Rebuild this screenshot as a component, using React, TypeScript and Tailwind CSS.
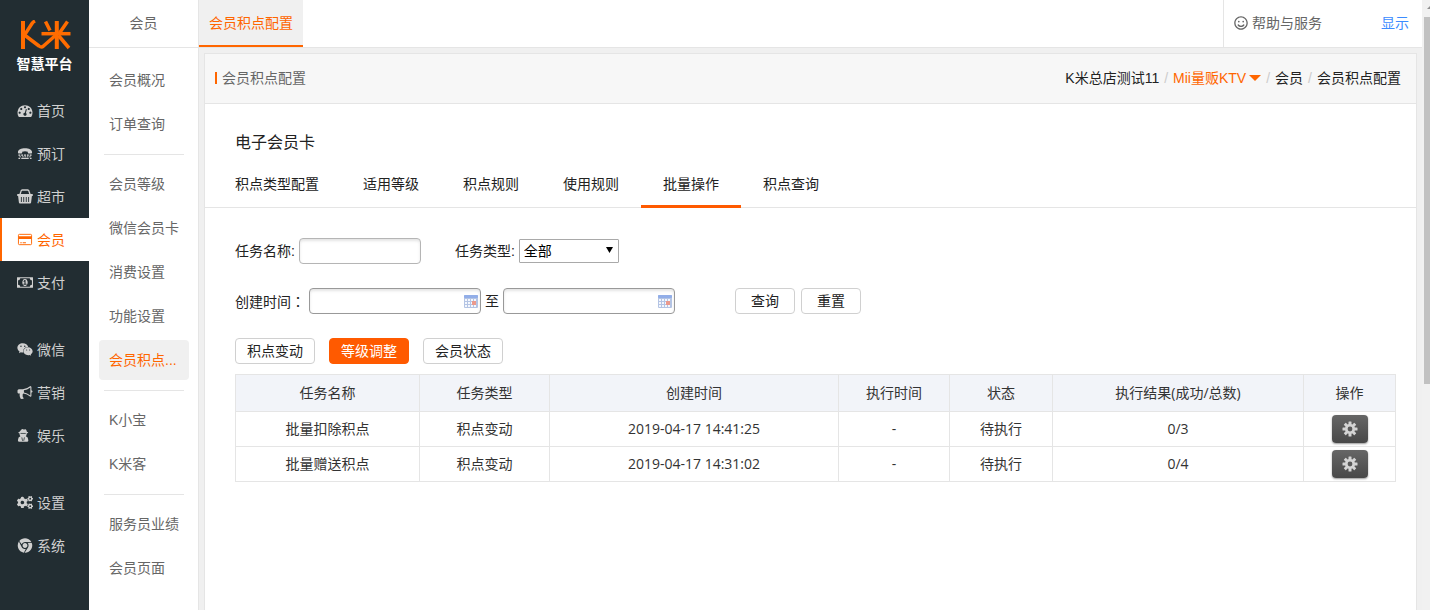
import React from "react"
import clsx from "clsx"
import { FaChrome, FaCogs, FaRegSmile, FaWeixin } from "react-icons/fa"

type IconProps = { className?: string }

function DashboardIcon({ className }: IconProps) {
  return (
    <svg viewBox="0 0 1792 1792" fill="currentColor" className={className}>
      <path d="M384 1152q0-53-37.5-90.5t-90.5-37.5-90.5 37.5-37.5 90.5 37.5 90.5 90.5 37.5 90.5-37.5 37.5-90.5zm192-448q0-53-37.5-90.5t-90.5-37.5-90.5 37.5-37.5 90.5 37.5 90.5 90.5 37.5 90.5-37.5 37.5-90.5zm428 481l101-382q6-26-7.5-48.5t-38.5-29.5-48 6.5-30 39.5l-101 382q-60 5-107 43.5t-63 98.5q-20 77 20 146t117 89 146-20 89-117q16-60-6-117t-72-91zm660-33q0-53-37.5-90.5t-90.5-37.5-90.5 37.5-37.5 90.5 37.5 90.5 90.5 37.5 90.5-37.5 37.5-90.5zm-640-640q0-53-37.5-90.5t-90.5-37.5-90.5 37.5-37.5 90.5 37.5 90.5 90.5 37.5 90.5-37.5 37.5-90.5zm448 192q0-53-37.5-90.5t-90.5-37.5-90.5 37.5-37.5 90.5 37.5 90.5 90.5 37.5 90.5-37.5 37.5-90.5zm320 448q0 261-141 483-19 29-54 29h-1402q-35 0-54-29-141-221-141-483 0-182 71-348t191-286 286-191 348-71 348 71 286 191 191 286 71 348z" />
    </svg>
  )
}

function PhoneIcon({ className }: IconProps) {
  return (
    <svg viewBox="0 0 16 16" fill="currentColor" className={className}>
      <path d="M.5 6.500C.5 4 4 2.500 8 2.500s7.500 1.500 7.500 4v.7q0 .8-.8.8h-2.900q-.8 0-.8-.8V6Q9.500 5.500 8 5.500T5 6v1.200q0 .8-.8.8H1.300Q.5 8 .5 7.200z" />
      {[1, 4, 7, 10, 13].map((x) => (
        <rect key={x} x={x} y="9" width="2" height="1.500" />
      ))}
      {[2, 5, 7.500, 10, 12.500].map((x) => (
        <rect key={x} x={x} y="11" width="1.600" height="1" />
      ))}
      <path d="M1 12.500h1.800v1.300H1zM4 12.500h8v1.300H4zM13.200 12.500H15v1.300h-1.800z" />
    </svg>
  )
}

function BasketIcon({ className }: IconProps) {
  return (
    <svg viewBox="0 0 16 15" className={className}>
      <path d="M2.800 6 4 2.200Q4.300 1 5.300 1h5.400q1 0 1.300 1.200L13.200 6" fill="none" stroke="currentColor" strokeWidth="1.300" />
      <path
        fillRule="evenodd"
        fill="currentColor"
        d="M.9 5h14.200q.9 0 .9 1t-.9 1h-.2l-.8 6.500q-.1 1-1.100 1H3q-1 0-1.100-1L1.100 7H.9Q0 7 0 6t.9-1zM3.900 8v5h.9V8zm2.400 0v5h.9V8zm2.500 0v5h.9V8zm2.400 0v5h.9V8z"
      />
    </svg>
  )
}

function CardIcon({ className }: IconProps) {
  return (
    <svg viewBox="0 0 16 16" className={className}>
      <rect x="1" y="2.500" width="14" height="11" rx="1" fill="none" stroke="currentColor" />
      <path d="M1 4.500h14v3H1zM3 11h1.500v1H3zM5.500 11H9v1H5.500z" fill="currentColor" />
    </svg>
  )
}

function MoneyIcon({ className }: IconProps) {
  return (
    <svg viewBox="0 128 1920 1536" fill="currentColor" className={className}>
      <path d="M768 1152h384v-96h-128v-448h-114l-148 137 77 80q42-37 55-57h2v288h-128v96zm512-256q0 70-21 142t-59.500 134-101.500 101-138 39-138-39-101.500-101-59.500-134-21-142 21-142 59.500-134 101.500-101 138-39 138 39 101.500 101 59.500 134 21 142zm512 256v-512q-106 0-181-75t-75-181h-1152q0 106-75 181t-181 75v512q106 0 181 75t75 181h1152q0-106 75-181t181-75zm128-832v1152q0 26-19 45t-45 19h-1792q-26 0-45-19t-19-45v-1152q0-26 19-45t45-19h1792q26 0 45 19t19 45z" />
    </svg>
  )
}

function HornIcon({ className }: IconProps) {
  return (
    <svg viewBox="0 0 1792 1792" fill="currentColor" className={className}>
      <path d="M1664 640q53 0 90.500 37.500t37.500 90.500-37.500 90.500-90.500 37.500v384q0 52-38 90t-90 38q-417-347-812-380-58 19-91 66t-31 100.500 40 92.500q-20 33-23 65.500t6 58 33.500 55 48 50 61.500 50.500q-29 58-111.500 83t-168.500 11.500-132-55.500q-7-23-29.500-87.500t-32-94.500-23-89-15-101 3.500-98.500 22-110.500h-122q-66 0-113-47t-47-113v-192q0-66 47-113t113-47h480q435 0 896-384 52 0 90 38t38 90v384zm-128 604v-954q-394 302-768 343v270q377 42 768 341z" />
    </svg>
  )
}

function AgentIcon({ className }: IconProps) {
  return (
    <svg viewBox="0 0 16 16" className={className}>
      <path
        fill="currentColor"
        d="M4.200 1.500Q5 .8 6 1.300t2 0Q9 1 9.400 2l.6 2q1.500.4 1.500.9 0 .6-1.700.9.200 1.700-.9 3 2.600.8 2.600 4v.7q0 1.200-1.300 1.200H1.800Q.5 14.700.5 13.500v-.7q0-3.200 2.600-4-1.100-1.300-.9-3Q.8 5.500.8 4.900q0-.5 1.400-.9z"
      />
      <path d="M3.200 5.800h5.600M4.600 10l.8 3.700M7.400 10l-.8 3.700" stroke="#222d32" strokeWidth=".8" />
    </svg>
  )
}

function GearIcon({ className }: IconProps) {
  return (
    <svg viewBox="0 0 16 16" className={className}>
      <g fill="currentColor">
        {[0, 45, 90, 135].map((angle) => (
          <rect key={angle} x="6.500" y="0.500" width="3" height="15" rx="0.500" transform={`rotate(${angle} 8 8)`} />
        ))}
        <circle cx="8" cy="8" r="5" />
      </g>
      <circle cx="8" cy="8" r="2.400" fill="#595959" />
    </svg>
  )
}

function CalendarIcon({ className }: IconProps) {
  return (
    <svg viewBox="0 0 14 13" className={className}>
      <rect x="0" y="0" width="14" height="13" rx="1" fill="#b4c4e4" />
      <rect x="0" y="0" width="14" height="3" rx="1" fill="#92aee8" />
      <g fill="#f4f7fd">
        {[1, 4, 7, 10].map((x) =>
          [4, 7, 10].map((y) => <rect key={`${x}-${y}`} x={x} y={y} width="2" height="2" />)
        )}
      </g>
      <rect x="8" y="6" width="4" height="4" fill="#eb9a8d" />
    </svg>
  )
}

function Logo() {
  return (
    <svg viewBox="0 0 52 30" className="h-[30px] w-[52px]" fill="none" stroke="#ff6c00" strokeWidth="4">
      <path d="M4 1v28" />
      <path d="M16 1Q14 2 13 3.500L5.500 15 20 26q2.500 2 4.500 0L37 15" strokeWidth="3.500" />
      <path d="M22.500 13.700h29" strokeWidth="3.500" />
      <path d="M37.800 1v28" />
      <path d="M26.500 1.500 31 10.500M48.500 1.500 40.500 13" strokeWidth="3.500" />
      <path d="M39.500 15.500 50 28" strokeWidth="3.500" />
    </svg>
  )
}

const mainMenu = [
  [
    { name: "首页", icon: DashboardIcon },
    { name: "预订", icon: PhoneIcon },
    { name: "超市", icon: BasketIcon },
    { name: "会员", icon: CardIcon, active: true },
    { name: "支付", icon: MoneyIcon },
  ],
  [
    { name: "微信", icon: FaWeixin },
    { name: "营销", icon: HornIcon },
    { name: "娱乐", icon: AgentIcon },
  ],
  [
    { name: "设置", icon: FaCogs },
    { name: "系统", icon: FaChrome },
  ],
]

const subMenu = [
  ["会员概况", "订单查询"],
  ["会员等级", "微信会员卡", "消费设置", "功能设置", "会员积点..."],
  ["K小宝", "K米客"],
  ["服务员业绩", "会员页面"],
]

const tabs = ["积点类型配置", "适用等级", "积点规则", "使用规则", "批量操作", "积点查询"]

const columns = [
  { title: "任务名称", width: "w-[184px]" },
  { title: "任务类型", width: "w-[130px]" },
  { title: "创建时间", width: "w-[289px]" },
  { title: "执行时间", width: "w-[111px]" },
  { title: "状态", width: "w-[103px]" },
  { title: "执行结果(成功/总数)", width: "w-[251px]" },
  { title: "操作", width: "w-[92px]" },
]

const tasks = [
  { name: "批量扣除积点", type: "积点变动", created: "2019-04-17 14:41:25", executed: "-", status: "待执行", result: "0/3" },
  { name: "批量赠送积点", type: "积点变动", created: "2019-04-17 14:31:02", executed: "-", status: "待执行", result: "0/4" },
]

function Sidebar() {
  return (
    <aside className="w-[89px] shrink-0 bg-[#222d32] text-[#d0d0d0]">
      <div className="flex h-[89px] flex-col items-center pt-5">
        <Logo />
        <span className="mt-1 text-sm leading-5 font-bold text-white">智慧平台</span>
      </div>
      <nav className="flex flex-col gap-6">
        {mainMenu.map((group, index) => (
          <ul key={index}>
            {group.map(({ name, icon: Icon, active }: { name: string; icon: React.ElementType; active?: boolean }) => (
              <li key={name}>
                <a
                  href="#"
                  className={clsx(
                    "flex h-[43px] items-center gap-1 border-l-2 pl-[15px]",
                    active ? "border-[#ff6600] bg-white text-[#ff6600]" : "border-transparent"
                  )}
                >
                  <Icon className="h-[15px] w-4" />
                  {name}
                </a>
              </li>
            ))}
          </ul>
        ))}
      </nav>
    </aside>
  )
}

function SubMenu() {
  return (
    <aside className="w-[110px] shrink-0 border-r border-[#e5e5e5] bg-white">
      <div className="flex h-12 items-center justify-center border-b border-[#e5e5e5] pb-0.5">会员</div>
      <nav className="px-2.5 pt-3">
        {subMenu.map((group, index) => (
          <div key={index}>
            {index > 0 && <hr className="mr-1 ml-[5px] mt-2.5 mb-[9px] border-[#e5e5e5]" />}
            <ul className="flex flex-col gap-1">
              {group.map((item) => (
                <li key={item}>
                  <a
                    href="#"
                    className={clsx(
                      "block w-[90px] rounded-sm px-2.5 leading-10 whitespace-nowrap",
                      item === "会员积点..." && "bg-[#f0f0f0] text-[#ff6600]"
                    )}
                  >
                    {item}
                  </a>
                </li>
              ))}
            </ul>
          </div>
        ))}
      </nav>
    </aside>
  )
}

function DateInput({ id, label }: { id: string; label: string }) {
  return (
    <span className="flex h-[26px] w-[172px] items-center rounded border border-[#999] pr-0.5 shadow-[inset_0_2px_3px_#e4e4e4]">
      <input id={id} aria-label={label} type="text" className="min-w-0 flex-1 px-1 outline-none" />
      <CalendarIcon className="h-[13px] w-3.5" />
    </span>
  )
}

function Button({ children, className }: { children: React.ReactNode; className?: string }) {
  return (
    <button type="button" className={clsx("h-[26px] rounded border text-center leading-6", className)}>
      {children}
    </button>
  )
}

export default function App() {
  return (
    <div className="flex min-h-screen bg-[#f0f0f0] font-['Liberation_Sans','Noto_Sans_CJK_SC',sans-serif] text-sm leading-5 text-[#666]">
      <Sidebar />
      <SubMenu />

      <div className="flex min-w-0 flex-1 flex-col">
        {/* Top bar */}
        <header className="flex h-12 justify-between border-b border-[#e5e5e5] bg-white">
          <a href="#" className="flex items-center border-b-2 border-[#ff6600] bg-[#f0f0f0] px-2.5 text-[#ff6600]">
            会员积点配置
          </a>
          <div className="flex w-[199px] items-center justify-between border-l border-[#e5e5e5] pr-[13px] pb-0.5 pl-2.5">
            <a href="#" className="flex items-center gap-1">
              <FaRegSmile className="h-3.5 w-3.5" />
              帮助与服务
            </a>
            <a href="#" className="text-[#3b8cff]">
              显示
            </a>
          </div>
        </header>

        <main className="mx-[5px] mt-[5px] flex-1 border border-b-0 border-[#e5e5e5] bg-white text-[#222]">
          {/* Title and breadcrumb */}
          <div className="flex h-[50px] items-center justify-between border-b border-[#e5e5e5] bg-[#f7f7f7] pr-[15px] pb-0.5 pl-2.5">
            <h1 className="flex items-center gap-[5px] text-[#666]">
              <span className="h-3 w-0.5 bg-[#ff6600]" />
              会员积点配置
            </h1>
            <div className="flex items-center gap-[5px]">
              <span>K米总店测试11</span>
              <span className="text-[#ccc]">/</span>
              <button type="button" className="flex items-center gap-[3px] text-[#ff6600]">
                Mii量贩KTV
                <svg viewBox="0 0 12 6" className="h-1.5 w-3">
                  <path d="M0 0h12L6 6z" fill="currentColor" />
                </svg>
              </button>
              <span className="text-[#ccc]">/</span>
              <a href="#">会员</a>
              <span className="text-[#ccc]">/</span>
              <span>会员积点配置</span>
            </div>
          </div>

          <h2 className="px-[30px] pt-[27px] text-base leading-6">电子会员卡</h2>

          <div className="mt-2 flex border-b border-[#e5e5e5] px-2">
            {tabs.map((tab) => (
              <button
                key={tab}
                type="button"
                className={clsx(
                  "-mb-px h-[45px] border-b-3 px-[22px]",
                  tab === "批量操作" ? "border-[#ff5a00]" : "border-transparent"
                )}
              >
                {tab}
              </button>
            ))}
          </div>

          <div className="px-5 pt-[30px] pl-[30px]">
            {/* Filters */}
            <form>
              <div className="flex items-center">
                <label htmlFor="taskName">任务名称:</label>
                <input
                  id="taskName"
                  type="text"
                  className="ml-1 h-[26px] w-[122px] rounded border border-[#b5b5b5] px-1 shadow-[inset_0_2px_3px_#e4e4e4] outline-none"
                />
                <label htmlFor="taskType" className="ml-[34px]">
                  任务类型:
                </label>
                <span className="relative ml-1">
                  <select
                    id="taskType"
                    className="block h-6 w-[100px] appearance-none rounded-[1px] border border-[#a9a9a9] bg-white pl-1 leading-5 text-black"
                  >
                    <option>全部</option>
                  </select>
                  <svg viewBox="0 0 7 6" className="pointer-events-none absolute top-2 right-1.5 h-1.5 w-[7px]">
                    <path d="M0 0h7L3.500 6z" fill="#000" />
                  </svg>
                </span>
              </div>

              <div className="mt-6 flex items-center">
                <label htmlFor="startTime">
                  创建时间<span className="font-['Noto_Sans_CJK_TC',sans-serif]">：</span>
                </label>
                <span className="ml-1">
                  <DateInput id="startTime" label="开始时间" />
                </span>
                <label htmlFor="endTime" className="mx-1">
                  至
                </label>
                <DateInput id="endTime" label="结束时间" />
                <Button className="ml-[60px] w-[60px] border-[#d0d0d0]">查询</Button>
                <Button className="ml-1.5 w-[60px] border-[#d0d0d0]">重置</Button>
              </div>
            </form>

            <div className="mt-6 flex gap-3.5">
              <Button className="w-20 border-[#d0d0d0]">积点变动</Button>
              <Button className="w-20 border-[#ff5a00] bg-[#ff5a00] text-white">等级调整</Button>
              <Button className="w-20 border-[#d0d0d0]">会员状态</Button>
            </div>

            {/* Task list */}
            <table className="mt-2.5 w-full table-fixed border-collapse text-center font-['Open_Sans','Noto_Sans_CJK_SC',sans-serif] text-[#333]">
              <thead>
                <tr className="h-[37px] bg-[#f2f4f9]">
                  {columns.map((column) => (
                    <th key={column.title} className={clsx("border border-[#e5e5e5] font-normal", column.width)}>
                      {column.title}
                    </th>
                  ))}
                </tr>
              </thead>
              <tbody>
                {tasks.map((task) => (
                  <tr key={task.name} className="h-[35px]">
                    <td className="border border-[#e5e5e5]">{task.name}</td>
                    <td className="border border-[#e5e5e5]">{task.type}</td>
                    <td className="border border-[#e5e5e5]">{task.created}</td>
                    <td className="border border-[#e5e5e5]">{task.executed}</td>
                    <td className="border border-[#e5e5e5]">{task.status}</td>
                    <td className="border border-[#e5e5e5]">{task.result}</td>
                    <td className="border border-[#e5e5e5]">
                      <button
                        type="button"
                        aria-label="操作"
                        className="mx-auto flex h-7 w-9 items-center justify-center rounded bg-linear-to-b from-[#666] to-[#484848] text-[#d4d4d4] shadow-[0_1px_2px_#999]"
                      >
                        <GearIcon className="h-4 w-4" />
                      </button>
                    </td>
                  </tr>
                ))}
              </tbody>
            </table>
          </div>
        </main>
      </div>

      {/* Scroll track */}
      <div className="flex w-2 shrink-0 flex-col gap-2 bg-[#f1f1f1] pt-1.5 pl-0.5">
        <svg viewBox="0 0 6 3" className="h-[3px] w-1.5">
          <path d="M3 3l3-3v3z" fill="#909090" />
        </svg>
        <div className="h-[367px] bg-[#c1c1c1]" />
      </div>
    </div>
  )
}
